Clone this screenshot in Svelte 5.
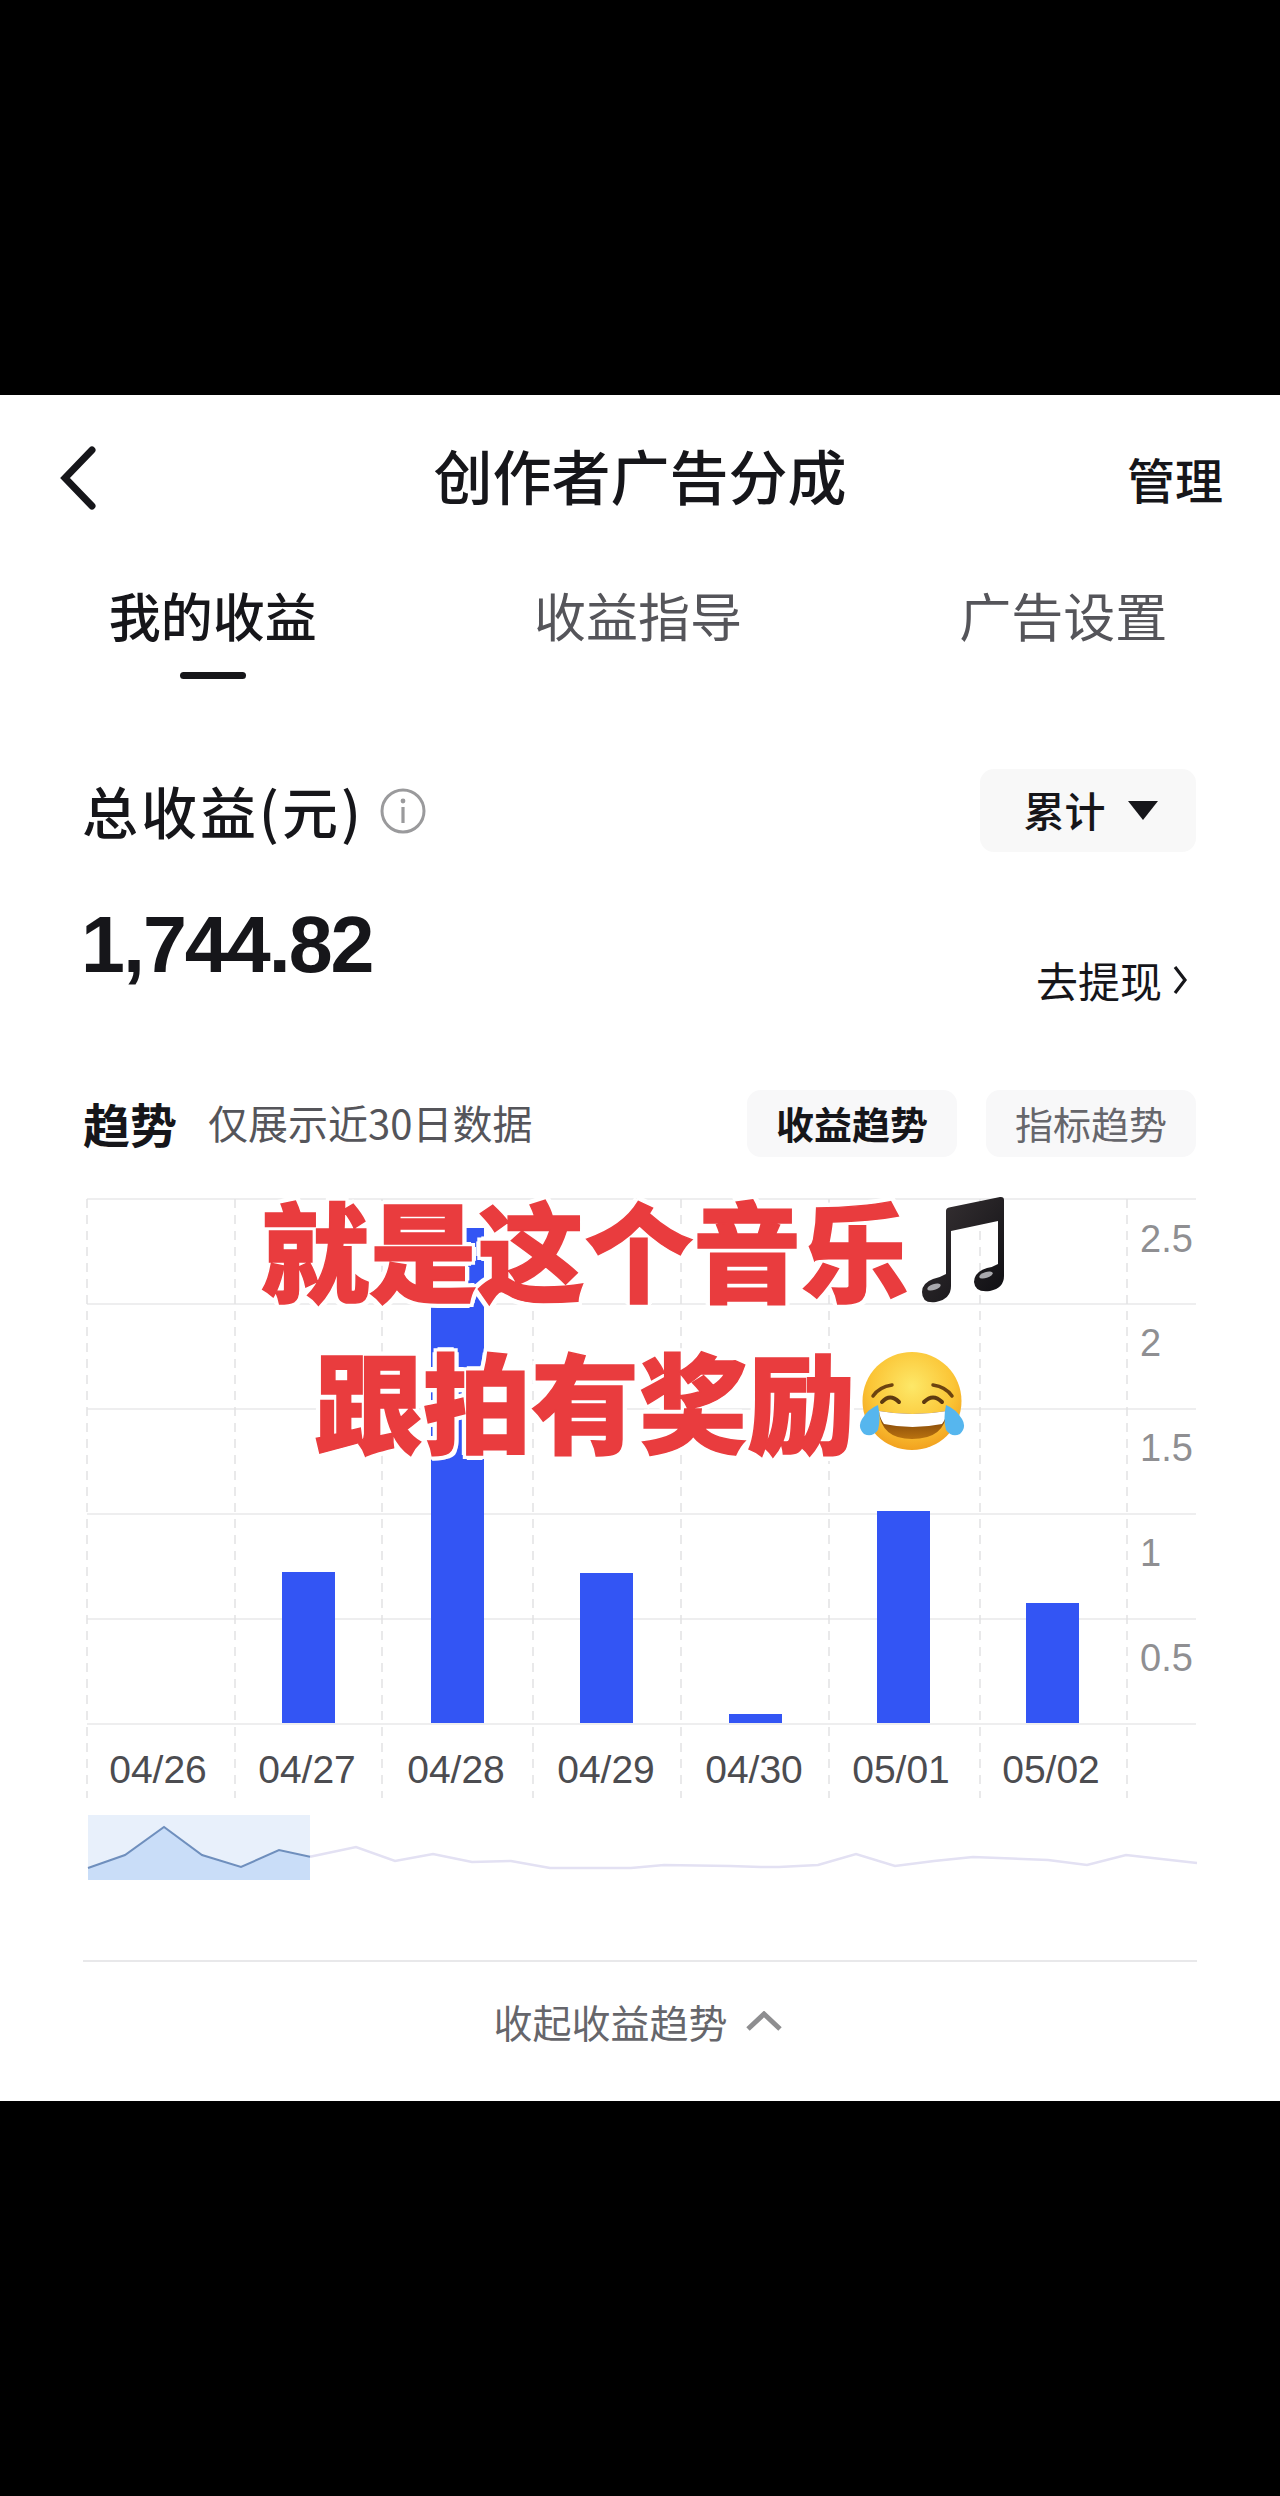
<script>
  const tabs = ['我的收益', '收益指导', '广告设置'];

  // chart coordinates are page x, and y measured from the top of .chart (page y 1190)
  const gridY = [9, 114, 219, 324, 429, 534];
  const gridX = [87, 235, 382, 533, 681, 829, 980, 1127];
  const axisLabels = [
    { text: '2.5', y: 62 },
    { text: '2', y: 166 },
    { text: '1.5', y: 271 },
    { text: '1', y: 376 },
    { text: '0.5', y: 481 }
  ];
  const bars = [
    { x: 282, top: 382 },
    { x: 431, top: 38 },
    { x: 580, top: 383 },
    { x: 729, top: 524 },
    { x: 877, top: 321 },
    { x: 1026, top: 413 }
  ];
  const dates = [
    { text: '04/26', x: 158 },
    { text: '04/27', x: 307 },
    { text: '04/28', x: 456 },
    { text: '04/29', x: 606 },
    { text: '04/30', x: 754 },
    { text: '05/01', x: 901 },
    { text: '05/02', x: 1051 }
  ];

  // minimap points, y from the top of .slider (page y 1810)
  const inRange = '88,58 125,45 164,17 202,45 241,57 279,40 310,46.7';
  const rest = '310,46.7 356,37 395,51 433,44 472,52 511,51 550,58 631,58 664,55 730,56 761,57 779,57 818,55 856,44 895,56 934,51 973,47 1048,50 1087,55 1126,45 1197,53';
</script>

<div class="page">
  <div class="screen">
    <header class="nav">
      <svg class="back" viewBox="0 0 36 64" width="36" height="64">
        <path d="M32 4 L5 32 L32 60" fill="none" stroke="#16161a" stroke-width="7" stroke-linecap="round" stroke-linejoin="miter" />
      </svg>
      <h1>创作者广告分成</h1>
      <span class="manage">管理</span>
    </header>

    <nav class="tabs">
      {#each tabs as tab, i}
        <div class="tab" class:active={i === 0}>
          <span>{tab}</span>
          {#if i === 0}<i></i>{/if}
        </div>
      {/each}
    </nav>

    <section class="summary">
      <div class="row total">
        <div class="label">
          <span>总收益(元)</span>
          <svg viewBox="0 0 46 46" width="46" height="46">
            <circle cx="23" cy="23" r="21" fill="none" stroke="#9a9a9c" stroke-width="3" />
            <circle cx="23" cy="13" r="2.4" fill="#9a9a9c" />
            <rect x="21.4" y="19" width="3.2" height="16" fill="#9a9a9c" />
          </svg>
        </div>
        <button class="range"><span>累计</span><b></b></button>
      </div>
      <div class="row amount">
        <strong>1,744.82</strong>
        <a class="withdraw">去提现
          <svg viewBox="0 0 16 30" width="16" height="30">
            <path d="M3 2 L13 15 L3 28" fill="none" stroke="#16161a" stroke-width="3.2" />
          </svg>
        </a>
      </div>
      <div class="row trend">
        <div class="trend-title">
          <h2>趋势</h2>
          <span>仅展示近30日数据</span>
        </div>
        <div class="chips">
          <span class="chip on">收益趋势</span>
          <span class="chip">指标趋势</span>
        </div>
      </div>
    </section>

    <div class="chart">
      <svg viewBox="0 0 1280 610" width="1280" height="610">
        {#each gridY as y}
          <line x1="87" x2="1196" y1={y} y2={y} stroke="#eeeeef" stroke-width="2" />
        {/each}
        {#each gridX as x}
          <line x1={x} x2={x} y1="9" y2="608" stroke="#e2e2e4" stroke-width="1.5" stroke-dasharray="9 7" />
        {/each}
        {#each bars as bar}
          <rect x={bar.x} y={bar.top} width="53" height={533 - bar.top} fill="#3355f4" />
        {/each}
        {#each axisLabels as label}
          <text class="axis" x="1140" y={label.y}>{label.text}</text>
        {/each}
        {#each dates as date}
          <text class="date" x={date.x} y="593" text-anchor="middle">{date.text}</text>
        {/each}
      </svg>

      <div class="caption">
        <div class="line one">
          <span>就是这个音乐</span>
          <svg viewBox="0 0 84 107" width="84" height="107">
            <defs>
              <linearGradient id="noteFill" x1="0" y1="0" x2="1" y2="1">
                <stop offset="0" stop-color="#3a3436" />
                <stop offset="1" stop-color="#0e0e12" />
              </linearGradient>
            </defs>
            <path d="M25 15 Q25 12 28 11.500 L79 1 Q83 0.500 83 4 L83 80 Q83 92 69 95 Q54 97 53 86 Q53 76 66 72 Q72 71 77 68 L77 25 L30 35 L30 90 Q30 103 15 106 Q1 108 1 96 Q1 87 12 83 Q20 81 25 78 Z" fill="url(#noteFill)" />
            <ellipse cx="13" cy="91" rx="7" ry="3" fill="#a9a9ad" transform="rotate(-18 13 91)" />
            <ellipse cx="65" cy="79" rx="7" ry="3" fill="#a9a9ad" transform="rotate(-18 65 79)" />
          </svg>
        </div>
        <div class="line two">
          <span>跟拍有奖励</span>
          <svg viewBox="0 0 106 100" width="106" height="100">
            <defs>
              <radialGradient id="faceFill" cx="0.5" cy="0.35" r="0.7">
                <stop offset="0" stop-color="#fde868" />
                <stop offset="0.6" stop-color="#fbc536" />
                <stop offset="1" stop-color="#f09a1a" />
              </radialGradient>
              <linearGradient id="mouthFill" x1="0" y1="0" x2="0" y2="1">
                <stop offset="0" stop-color="#6d3608" />
                <stop offset="1" stop-color="#b9720f" />
              </linearGradient>
            </defs>
            <ellipse cx="53" cy="50" rx="49.500" ry="49" fill="url(#faceFill)" />
            <path d="M20 60 Q53 66 88 60 Q86 88 53 88 Q22 88 20 60 Z" fill="url(#mouthFill)" />
            <path d="M20 60 Q53 66 88 60 Q87 68 83 73 Q53 79 25 73 Q21 68 20 60 Z" fill="#fff" />
            <path d="M23 51 Q31 42 40 51 M65 51 Q74 42 83 51" fill="none" stroke="#5e3a10" stroke-width="4" stroke-linecap="round" />
            <path d="M14 45 Q20 36 33 34 M74 34 Q87 36 93 45" fill="none" stroke="#6d4310" stroke-width="3.500" stroke-linecap="round" />
            <path d="M19 54 Q22 68 19 79 Q13 87 5 83 Q-2 76 3 68 Q9 58 19 54 Z" fill="#56b6ee" />
            <path d="M87 54 Q84 68 87 79 Q93 87 101 83 Q108 76 103 68 Q97 58 87 54 Z" fill="#56b6ee" />
          </svg>
        </div>
      </div>
    </div>

    <div class="slider">
      <svg viewBox="0 0 1280 80" width="1280" height="80">
        <rect x="88" y="5" width="222" height="65" fill="#e8f0fb" />
        <polygon points="{inRange} 310,70 88,70" fill="#c9ddf8" />
        <polyline points={rest} fill="none" stroke="#e3e1f3" stroke-width="2.500" />
        <polyline points={inRange} fill="none" stroke="#6f8fbd" stroke-width="2" />
      </svg>
    </div>

    <footer class="collapse">
      <span>收起收益趋势</span>
      <svg viewBox="0 0 36 20" width="36" height="20">
        <path d="M2 18 L18 3 L34 18" fill="none" stroke="#8e8e90" stroke-width="5" />
      </svg>
    </footer>
  </div>
</div>

<style>
  :global(body) {
    margin: 0;
    background: #000;
  }

  .page {
    width: 1280px;
    height: 2496px;
    padding-top: 395px;
    box-sizing: border-box;
    background: #000;
    font-family: "Noto Sans CJK SC", "Liberation Sans", sans-serif;
    color: #16161a;
  }

  .screen {
    height: 1706px;
    background: #fff;
    overflow: hidden;
  }

  .nav {
    height: 165px;
    padding: 0 57px 0 60px;
    display: grid;
    grid-template-columns: 1fr auto 1fr;
    align-items: center;
  }
  .nav h1 {
    margin: -5px 3px 0 0;
    font-size: 59px;
    line-height: 70px;
    font-weight: 500;
  }
  .manage {
    justify-self: end;
    font-size: 48px;
    line-height: 60px;
    font-weight: 500;
    margin-top: 1px;
  }
  .back {
    display: block;
  }

  .tabs {
    display: grid;
    grid-template-columns: repeat(3, 1fr);
    padding-right: 4px;
  }
  .tab {
    height: 119px;
    display: flex;
    flex-direction: column;
    align-items: center;
    font-size: 52px;
    line-height: 110px;
    color: #55555a;
  }
  .tab.active {
    color: #16161a;
    font-weight: 500;
  }
  .tab i {
    display: block;
    width: 66px;
    height: 7px;
    margin-top: 2px;
    border-radius: 4px;
    background: #16161a;
  }

  .summary {
    padding: 0 84px;
  }
  .row {
    display: flex;
    justify-content: space-between;
  }
  .total {
    margin-top: 90px;
    height: 83px;
    align-items: center;
  }
  .label {
    display: flex;
    align-items: center;
    gap: 16px;
    font-size: 56px;
    font-weight: 500;
    line-height: 70px;
    letter-spacing: 3px;
  }
  .label span {
    margin: -2px 0 0 -2px;
  }
  .label svg {
    display: block;
  }
  .range {
    width: 216px;
    height: 83px;
    padding: 0 0 0 5px;
    border: none;
    border-radius: 14px;
    background: #f8f8f8;
    display: flex;
    align-items: center;
    justify-content: center;
    gap: 22px;
    font-family: inherit;
    font-size: 41px;
    font-weight: 500;
    color: #16161a;
  }
  .range span {
    margin-top: -3px;
  }
  .range b {
    display: block;
    border-left: 15px solid transparent;
    border-right: 15px solid transparent;
    border-top: 19px solid #16161a;
  }

  .amount {
    height: 160px;
  }
  .amount strong {
    margin: 53px 0 0 -3px;
    font-family: "Liberation Sans", sans-serif;
    font-size: 79px;
    line-height: 80px;
    letter-spacing: -2px;
    height: 80px;
  }
  .withdraw {
    align-self: flex-end;
    display: flex;
    align-items: center;
    gap: 10px;
    margin: 0 8px 2px 0;
    font-size: 42px;
    line-height: 60px;
  }

  .trend {
    margin-top: 78px;
    height: 67px;
    align-items: center;
  }
  .trend-title {
    display: flex;
    align-items: center;
    gap: 31px;
  }
  .trend-title h2 {
    margin: -2px 0 0 -1px;
    font-size: 47px;
    font-weight: 700;
    line-height: 60px;
  }
  .trend-title span {
    margin-top: -3px;
    font-size: 40px;
    line-height: 60px;
    color: #55555a;
  }
  .chips {
    display: flex;
    gap: 29px;
  }
  .chip {
    width: 210px;
    height: 67px;
    padding-bottom: 3px;
    box-sizing: border-box;
    border-radius: 14px;
    background: #f8f8f9;
    display: flex;
    align-items: center;
    justify-content: center;
    font-size: 38px;
    color: #66666b;
  }
  .chip.on {
    color: #16161a;
    font-weight: 700;
  }

  .chart {
    position: relative;
    margin-top: 33px;
    height: 610px;
  }
  .chart svg {
    display: block;
  }
  .axis {
    font-family: "Liberation Sans", sans-serif;
    font-size: 38px;
    fill: #8f8f92;
  }
  .date {
    font-family: "Liberation Sans", sans-serif;
    font-size: 39px;
    fill: #4c4c50;
  }

  .caption {
    position: absolute;
    left: 0;
    right: 0;
    top: 5px;
    display: flex;
    flex-direction: column;
    gap: 46px;
  }
  .line {
    display: flex;
    align-items: center;
    height: 105px;
    justify-content: center;
    gap: 12px;
    font-size: 108px;
    line-height: 105px;
    font-weight: 900;
    color: #e93c3e;
    -webkit-text-stroke: 1.5px #e93c3e;
    text-shadow: 5px 0 #fff, -5px 0 #fff, 0 5px #fff, 0 -5px #fff, 4px 4px #fff, -4px 4px #fff, 4px -4px #fff, -4px -4px #fff;
  }
  .line svg {
    margin-top: 4px;
  }
  .line.one {
    padding-right: 14px;
    box-sizing: border-box;
  }
  .line.two {
    gap: 4px;
  }

  .slider {
    margin-top: 10px;
    height: 80px;
  }
  .slider svg {
    display: block;
  }

  .collapse {
    margin: 70px 83px 0;
    height: 124px;
    padding-right: 5px;
    padding-bottom: 4px;
    box-sizing: border-box;
    border-top: 2px solid #e8e8ea;
    display: flex;
    align-items: center;
    justify-content: center;
    gap: 18px;
    font-size: 39px;
    color: #66666b;
  }
</style>
